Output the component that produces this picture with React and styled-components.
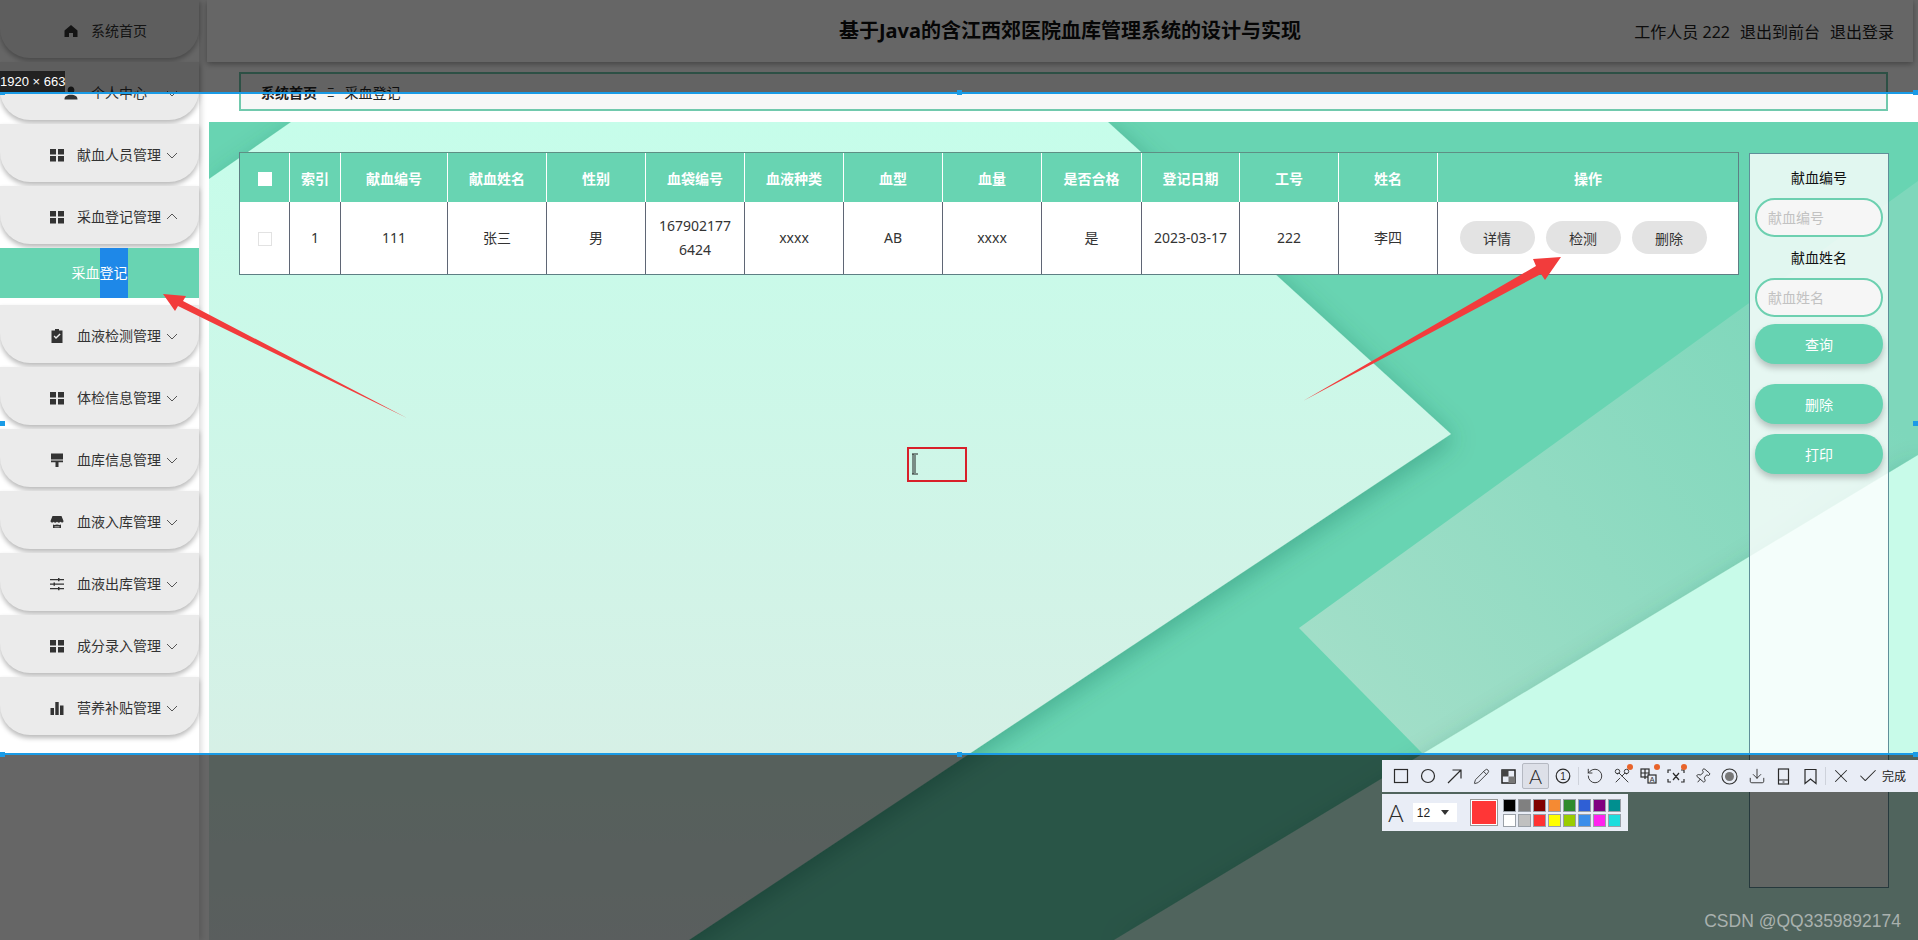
import React from "react";
import styled, { createGlobalStyle } from "styled-components";
import { RotateCcw, Pencil, Scissors, Pin, Download, X, Check } from "lucide-react";

const FONT = `"Noto Sans", "Noto Sans CJK SC", "Liberation Sans", sans-serif`;
const GREEN = "#68d4b2";

const Global = createGlobalStyle`
  html, body {
    margin: 0;
    height: 940px;
    overflow: hidden;
    background: #fff;
    font-family: ${FONT};
  }
  * { box-sizing: border-box; }
`;

const Page = styled.div`
  position: relative;
  display: flex;
  width: 1918px;
  height: 940px;
  overflow: hidden;
`;

/* 侧边栏 */
const Sidebar = styled.aside`
  flex: none;
  width: 199px;
  margin-right: 10px;
  background: #fff;
  box-shadow: 3px 0 5px rgba(0, 0, 0, 0.12);
`;

const MenuItem = styled.div`
  display: grid;
  grid-template-columns: 77px 84px 1fr;
  align-items: center;
  height: 58px;
  margin-bottom: 4px;
  padding: 3px 22px 0 0;
  background: #ebebeb;
  border-radius: 0 0 30px 30px;
  box-shadow: 0 3px 5px rgba(0, 0, 0, 0.28);
  color: #333;
  font-size: 14px;
  line-height: 20px;
  text-align: center;
`;

const MenuIcon = styled.svg`
  justify-self: end;
  width: 14px;
  height: 14px;
  margin-right: ${(p) => (p.$short ? "-1px" : "13px")};
  fill: #333;
`;

const Chevron = styled.svg`
  justify-self: end;
  width: 10px;
  height: 10px;
  fill: none;
  stroke: #555;
  stroke-width: 1;
`;

const SubItem = styled.div`
  height: 50px;
  margin-bottom: 7px;
  background: ${GREEN};
  color: #fff;
  font-size: 14px;
  line-height: 50px;
  text-align: center;
`;

const Selected = styled.span`
  display: inline-block;
  background: #1e88e8;
`;

const icons = {
  home: <path d="M7 1 13.5 6.6V13H9V9H5v4H.5V6.6z" />,
  user: <path d="M7 .5c2 0 3.4 1.5 3.4 3.6S9 7.8 7 7.8 3.6 6.2 3.6 4.1 5 .5 7 .5zM.5 13.5c0-3.2 2.6-4.7 6.5-4.7s6.500 1.500 6.500 4.700z" />,
  grid: <path d="M0 1h6v5.500H0zM8 1h6v5.500H8zM0 8h6v5.500H0zM8 8h6v5.500H8z" />,
  claim: <path fillRule="evenodd" d="M5 0h4v1.500h3.500V14h-11V1.500H5zM3.600 7.500 6 10l4.600-4.600-1-1L6 8 4.600 6.500z" />,
  brush: <path d="M1 .5h12v6H1zM1 7.500h12v1.800H8.500V14h-3V9.300H1z" />,
  shop: <path d="M2.500 1h9L13.500 6c0 2-2.200 2-3.200.8-1 1.200-1.700 1.200-3.300 0-1.600 1.200-2.300 1.200-3.300 0C3.700 8 .5 8 .5 6zM3 9.500c1 .6 2.300.4 4 0 1.700.4 3 .6 4 0V13H3zM4.500 11.500v.7h5v-.7z" />,
  sliders: <path d="M0 2h8V1h1.500v1H14v1.200H9.500v1H8v-1H0zM0 6.500h3.500v-1H5v1h9v1.200H5v1H3.500v-1H0zM0 11h8v-1h1.500v1H14v1.200H9.500v1H8v-1H0z" />,
  bars: <path d="M.5 7H4v7H.5zM5.300 1h3.400v13H5.300zM10 4.500h3.500V14H10z" />
};

const menu = [
  { icon: "home", label: "系统首页", plain: true },
  { icon: "user", label: "个人中心" },
  { icon: "grid", label: "献血人员管理" },
  { icon: "grid", label: "采血登记管理", open: true },
  { icon: "claim", label: "血液检测管理" },
  { icon: "grid", label: "体检信息管理" },
  { icon: "brush", label: "血库信息管理" },
  { icon: "shop", label: "血液入库管理" },
  { icon: "sliders", label: "血液出库管理" },
  { icon: "grid", label: "成分录入管理" },
  { icon: "bars", label: "营养补贴管理" }
];

/* 右侧 */
const Main = styled.main`
  flex: 1;
  display: flex;
  flex-direction: column;
  min-width: 0;
`;

const Header = styled.header`
  flex: none;
  display: grid;
  grid-template-columns: 1fr auto 1fr;
  align-items: center;
  height: 62px;
  margin: 0 5px 10px -2px;
  padding: 0 19px 0 39px;
  background: #fff;
  box-shadow: 0 2px 6px rgba(0, 0, 0, 0.35);
`;

const Title = styled.h1`
  grid-column: 2;
  margin: 0;
  color: #111;
  font-size: 20px;
  font-weight: 700;
  line-height: 28px;
  white-space: nowrap;
`;

const HeaderLinks = styled.div`
  display: flex;
  justify-self: end;
  gap: 10px;
  color: #222;
  font-size: 16px;
  white-space: nowrap;
`;

const Breadcrumb = styled.nav`
  flex: none;
  display: flex;
  align-items: center;
  gap: 10px;
  height: 39px;
  margin: 0 30px 11px;
  padding: 1px 20px 0;
  border: 2px solid #71c9ad;
  background: #f7f7f7;
  color: #222;
  font-size: 14px;
`;

const Crumb = styled.span`
  font-weight: ${(p) => (p.$strong ? 700 : 400)};
`;

const Sep = styled.span`
  font-size: 12px;
  color: #333;
`;

const Content = styled.section`
  position: relative;
  flex: 1;
  display: flex;
  align-items: flex-start;
  gap: 10px;
  padding: 30px 29px 0 30px;
  overflow: hidden;
`;

const Backdrop = styled.svg`
  position: absolute;
  inset: 0;
  width: 100%;
  height: 100%;
`;

const TableWrap = styled.div`
  position: relative;
  flex: none;
  width: 1500px;
  border: 1px solid #5e7f84;
  border-top-color: #5e8f84;
`;

const Table = styled.table`
  width: 100%;
  table-layout: fixed;
  border-collapse: separate;
  border-spacing: 0;
  font-size: 14px;
  text-align: center;
`;

const Th = styled.th`
  height: 49px;
  padding: 0;
  background: ${GREEN};
  border-left: ${(p) => (p.$first ? "0" : "1px solid #fff")};
  color: #fff;
  font-size: 14px;
  font-weight: 700;
`;

const Td = styled.td`
  height: 72px;
  padding: 0 10px;
  background: #fff;
  border-left: ${(p) => (p.$first ? "0" : "1px solid #5f6675")};
  color: #333;
  line-height: 24px;
  word-break: break-all;
`;

const ActionsCell = styled.div`
  display: flex;
  justify-content: center;
  gap: 11px;
  margin: -1px 10px 0 0;
`;

const Box = styled.span`
  display: inline-block;
  width: 14px;
  height: 14px;
  vertical-align: middle;
  background: ${(p) => (p.$filled ? "#fff" : "transparent")};
  border: 1px solid ${(p) => (p.$filled ? "#fff" : "#e2e2e2")};
`;

const ActionBtn = styled.button`
  width: 75px;
  height: 33px;
  padding: 0;
  border: 0;
  border-radius: 17px;
  background: #e3e3e3;
  color: #333;
  font-family: inherit;
  font-size: 14px;
`;

const Panel = styled.aside`
  position: relative;
  flex: none;
  display: flex;
  flex-direction: column;
  align-items: center;
  width: 140px;
  height: 735px;
  margin-top: 1px;
  padding: 12px 5px 0;
  background: rgba(255, 255, 255, 0.8);
  border: 1px solid #5f8f99;
`;

const PanelLabel = styled.label`
  height: 24px;
  margin: 0 0 8px;
  color: #111;
  font-size: 14px;
  line-height: 24px;
`;

const PanelInput = styled.input`
  width: 128px;
  height: 39px;
  margin-bottom: ${(p) => (p.$last ? "7px" : "9px")};
  padding: 0 11px;
  border: 2px solid #6dd0b0;
  border-radius: 20px;
  background: #f6f6f6;
  font-family: inherit;
  font-size: 14px;
  outline: none;
  &::placeholder { color: #c2c2c2; }
`;

const PanelBtn = styled.button`
  flex: none;
  width: 128px;
  height: 40px;
  margin-bottom: ${(p) => p.$gap}px;
  border: 0;
  border-radius: 20px;
  background: #66d3b2;
  box-shadow: 0 4px 6px rgba(0, 0, 0, 0.22);
  color: #fff;
  font-family: inherit;
  font-size: 14px;
`;

/* 截图工具遮罩 */
const Dim = styled.div`
  position: absolute;
  left: 0;
  width: 100%;
  top: ${(p) => p.$top}px;
  height: ${(p) => p.$height}px;
  background: rgba(0, 0, 0, 0.6);
`;

const SelectLine = styled.div`
  position: absolute;
  left: 0;
  top: 92px;
  width: 1918px;
  height: 663px;
  border: solid #1a9be6;
  border-width: 2px 0;
`;

const Handle = styled.i`
  position: absolute;
  width: 5px;
  height: 5px;
  background: #1a9be6;
  left: ${(p) => p.$x}px;
  top: ${(p) => p.$y}px;
`;

const SizeTag = styled.div`
  position: absolute;
  left: 0;
  top: 71px;
  width: 65px;
  height: 21px;
  background: #222;
  color: #fff;
  font-family: "Liberation Sans", sans-serif;
  font-size: 13px;
  line-height: 21px;
  white-space: nowrap;
`;

const Annotations = styled.svg`
  position: absolute;
  left: 0;
  top: 0;
  width: 1918px;
  height: 940px;
  pointer-events: none;
`;

const ToolBar = styled.div`
  position: absolute;
  left: 1382px;
  top: 760px;
  display: flex;
  align-items: center;
  width: 536px;
  height: 32px;
  padding-left: 5px;
  background: #e9edf6;
  color: #2b2b2b;
`;

const Tool = styled.span`
  position: relative;
  flex: none;
  display: flex;
  align-items: center;
  justify-content: center;
  width: 27px;
  height: 26px;
  border: 1px solid ${(p) => (p.$active ? "#b5b9c2" : "transparent")};
  background: ${(p) => (p.$active ? "#dde0e8" : "transparent")};
  border-radius: 2px;
`;

const Dot = styled.i`
  position: absolute;
  right: 1px;
  top: 0;
  width: 6px;
  height: 6px;
  border-radius: 50%;
  background: #e8632a;
`;

const ToolSep = styled.span`
  flex: none;
  width: 1px;
  height: 18px;
  margin: 0 ${(p) => p.$m}px;
  background: #ced2db;
`;

const BigA = styled.span`
  font-family: Lato, "Liberation Sans", sans-serif;
  font-weight: 300;
  font-size: ${(p) => p.$size}px;
  line-height: 1;
  color: #2b2b2b;
`;

const DoneText = styled.span`
  margin-left: 1px;
  color: #222;
  font-size: 12px;
  white-space: nowrap;
`;

const OptionBar = styled.div`
  position: absolute;
  left: 1382px;
  top: 794px;
  display: flex;
  align-items: center;
  width: 246px;
  height: 37px;
  padding-left: 6px;
  background: #e9edf6;
`;

const SizeSelect = styled.div`
  display: flex;
  align-items: center;
  justify-content: space-between;
  width: 44px;
  height: 19px;
  margin: 0 13px 0 9px;
  padding: 0 8px 0 4px;
  background: #fff;
  color: #222;
  font-family: "Liberation Sans", sans-serif;
  font-size: 12px;
  &::after {
    content: "";
    border: 4px solid transparent;
    border-top: 5px solid #333;
    border-bottom: 0;
  }
`;

const CurrentColor = styled.span`
  flex: none;
  width: 28px;
  height: 27px;
  margin-right: 5px;
  background: #ff3636;
  border: 1px solid #999;
  outline: 1px solid #fff;
  outline-offset: -2px;
`;

const Swatches = styled.div`
  display: grid;
  grid-template-columns: repeat(8, 13px);
  gap: 2px;
`;

const Swatch = styled.span`
  height: 13px;
  background: ${(p) => p.$c};
  border: 1px solid #9aa0a8;
`;

const Watermark = styled.div`
  position: absolute;
  right: 17px;
  top: 911px;
  color: #a9b1ae;
  font-family: "Liberation Sans", sans-serif;
  font-size: 17.5px;
  white-space: nowrap;
`;

const columns = [49, 51, 107, 99, 99, 99, 99, 99, 99, 100, 98, 99, 99];
const heads = ["索引", "献血编号", "献血姓名", "性别", "血袋编号", "血液种类", "血型", "血量", "是否合格", "登记日期", "工号", "姓名", "操作"];
const row = ["1", "111", "张三", "男", "1679021776424", "xxxx", "AB", "xxxx", "是", "2023-03-17", "222", "李四"];
const colors = ["#000", "#808080", "#800000", "#f58a33", "#2e8b2e", "#2f5fd5", "#800080", "#008f8f", "#fff", "#c0c0c0", "#ff3333", "#ffff00", "#99cc00", "#3b8eea", "#ff22ee", "#1ddddd"];

const stroke = { fill: "none", stroke: "currentColor", strokeWidth: 1.2 };

function Background() {
  return (
    <Backdrop viewBox="209 122 1709 818" preserveAspectRatio="none">
      <defs>
        <linearGradient id="light" x1="0" y1="122" x2="0" y2="940" gradientUnits="userSpaceOnUse">
          <stop offset="0" stopColor="#c6fdea" />
          <stop offset="0.77" stopColor="#d6f0e6" />
          <stop offset="1" stopColor="#e0ecea" />
        </linearGradient>
        <linearGradient id="glass" x1="1300" y1="700" x2="1800" y2="300" gradientUnits="userSpaceOnUse">
          <stop offset="0" stopColor="#a4dfc9" />
          <stop offset="1" stopColor="#7ed7bb" />
        </linearGradient>
        <filter id="soft" x="-10%" y="-10%" width="120%" height="120%">
          <feDropShadow dx="4" dy="6" stdDeviation="12" floodColor="#0f5a44" floodOpacity="0.3" />
        </filter>
      </defs>
      <rect x="209" y="122" width="1709" height="818" fill={GREEN} />
      <polygon points="1299,628 1918,181 1918,455 1424,755" fill="url(#glass)" />
      <polygon points="1114,940 1918,455 1918,940" fill="#c8fbe9" filter="url(#soft)" />
      <polygon points="291,122 1108,122 1451,434 689,940 209,940 209,179" fill="url(#light)" filter="url(#soft)" />
    </Backdrop>
  );
}

function Tools() {
  return (
    <ToolBar>
      <Tool><svg width="16" height="16" {...stroke}><rect x="1.5" y="1.5" width="13" height="13" /></svg></Tool>
      <Tool><svg width="16" height="16" {...stroke}><circle cx="8" cy="8" r="6.5" /></svg></Tool>
      <Tool><svg width="17" height="17" {...stroke}><path d="M2 15 15 2M6.5 2H15v8.500" /></svg></Tool>
      <Tool><Pencil size={17} strokeWidth={1.2} /></Tool>
      <Tool>
        <svg width="15" height="15">
          <rect x="1" y="1" width="13" height="13" fill="none" stroke="#222" strokeWidth="1.5" />
          <rect x="1" y="1" width="6.5" height="6.5" fill="#444" />
          <rect x="7.5" y="7.5" width="6.5" height="6.5" fill="#777" />
        </svg>
      </Tool>
      <Tool $active><BigA $size={20}>A</BigA></Tool>
      <Tool>
        <svg width="16" height="16" {...stroke}>
          <circle cx="8" cy="8" r="6.8" />
          <text x="8" y="11.5" textAnchor="middle" fontSize="10" fill="currentColor" stroke="none" fontFamily="Liberation Sans">1</text>
        </svg>
      </Tool>
      <ToolSep $m={2} />
      <Tool><RotateCcw size={18} strokeWidth={1.2} /></Tool>
      <Tool><Scissors size={18} strokeWidth={1.2} style={{ transform: "rotate(90deg)" }} /><Dot /></Tool>
      <Tool>
        <svg width="18" height="16" {...stroke}>
          <rect x="1" y="1" width="8" height="8" />
          <path d="M1 5h8M5 1v10" />
          <rect x="8" y="7" width="8" height="8" fill="#e9edf6" />
          <text x="12" y="14" textAnchor="middle" fontSize="7" fill="currentColor" stroke="none" fontFamily="Liberation Sans">A</text>
        </svg>
        <Dot />
      </Tool>
      <Tool>
        <svg width="18" height="16" {...stroke}>
          <path d="M1 5V2h3M14 2h3v3M1 11v3h3M14 14h3v-3M6 5l6 7M12 5l-6 7" />
        </svg>
        <Dot />
      </Tool>
      <Tool><Pin size={17} strokeWidth={1.2} style={{ transform: "rotate(40deg)" }} /></Tool>
      <Tool>
        <svg width="17" height="17">
          <circle cx="8.5" cy="8.5" r="7.5" fill="none" stroke="#333" strokeWidth="1.1" />
          <circle cx="8.5" cy="8.5" r="4.5" fill="#777" />
        </svg>
      </Tool>
      <Tool><Download size={18} strokeWidth={1.2} /></Tool>
      <Tool>
        <svg width="14" height="17" {...stroke}><rect x="1.5" y="1" width="10" height="15" /><path d="M1.5 12h10M5.500 14h2" /></svg>
      </Tool>
      <Tool><svg width="15" height="17" {...stroke}><path d="M2 1.500h11V15.500L7.500 11 2 15.500z" /></svg></Tool>
      <ToolSep $m={1} />
      <Tool><X size={22} strokeWidth={1.1} /></Tool>
      <Tool><Check size={22} strokeWidth={1.1} /></Tool>
      <DoneText>完成</DoneText>
    </ToolBar>
  );
}

export default function App() {
  return (
    <Page>
      <Global />
      <Sidebar>
        {menu.map((m) => (
          <React.Fragment key={m.label}>
            <MenuItem>
              <MenuIcon viewBox="0 0 14 14" $short={m.label.length === 4}>{icons[m.icon]}</MenuIcon>
              <span>{m.label}</span>
              {!m.plain && (
                <Chevron viewBox="0 0 10 10">
                  <polyline points={m.open ? "0,7 5,2 10,7" : "0,3 5,8 10,3"} />
                </Chevron>
              )}
            </MenuItem>
            {m.open && <SubItem>采血<Selected>登记</Selected></SubItem>}
          </React.Fragment>
        ))}
      </Sidebar>

      <Main>
        <Header>
          <Title>基于Java的含江西郊医院血库管理系统的设计与实现</Title>
          <HeaderLinks>
            <span>工作人员&nbsp;222</span>
            <span>退出到前台</span>
            <span>退出登录</span>
          </HeaderLinks>
        </Header>
        <Breadcrumb>
          <Crumb $strong>系统首页</Crumb>
          <Sep>Ξ</Sep>
          <Crumb>采血登记</Crumb>
        </Breadcrumb>
        <Content>
          <Background />
          <TableWrap>
            <Table>
              <colgroup>
                {columns.map((w, i) => <col key={i} style={{ width: w }} />)}
                <col />
              </colgroup>
              <thead>
                <tr>
                  <Th $first><Box $filled /></Th>
                  {heads.map((h) => <Th key={h}>{h}</Th>)}
                </tr>
              </thead>
              <tbody>
                <tr>
                  <Td $first><Box /></Td>
                  {row.map((c, i) => <Td key={i}>{c}</Td>)}
                  <Td>
                    <ActionsCell>
                      <ActionBtn>详情</ActionBtn>
                      <ActionBtn>检测</ActionBtn>
                      <ActionBtn>删除</ActionBtn>
                    </ActionsCell>
                  </Td>
                </tr>
              </tbody>
            </Table>
          </TableWrap>
          <Panel>
            <PanelLabel>献血编号</PanelLabel>
            <PanelInput placeholder="献血编号" />
            <PanelLabel>献血姓名</PanelLabel>
            <PanelInput $last placeholder="献血姓名" />
            <PanelBtn $gap={20}>查询</PanelBtn>
            <PanelBtn $gap={10}>删除</PanelBtn>
            <PanelBtn $gap={0}>打印</PanelBtn>
          </Panel>
        </Content>
      </Main>

      <Annotations viewBox="0 0 1918 940">
        <polygon points="163,294 186,296 183,301 407,418 178,306 175,311" fill="#f23c3c" />
        <polygon points="1561,257 1545,280 1541,274 1303,401 1536,266 1533,259" fill="#f23c3c" />
        <rect x="908" y="448" width="58" height="33" fill="none" stroke="#d8202a" strokeWidth="2" />
        <path d="M913 454v20M915 455v18M912 454h6M912 474h6" fill="none" stroke="#222" strokeWidth="1" />
      </Annotations>

      <Dim $top={0} $height={93} />
      <Dim $top={755} $height={185} />
      <SelectLine />
      <Handle $x={0} $y={90} />
      <Handle $x={957} $y={90} />
      <Handle $x={1913} $y={90} />
      <Handle $x={0} $y={421} />
      <Handle $x={1913} $y={421} />
      <Handle $x={0} $y={752} />
      <Handle $x={957} $y={752} />
      <Handle $x={1913} $y={752} />
      <SizeTag>1920 × 663</SizeTag>

      <Tools />
      <OptionBar>
        <BigA $size={24}>A</BigA>
        <SizeSelect>12</SizeSelect>
        <CurrentColor />
        <Swatches>
          {colors.map((c) => <Swatch key={c} $c={c} />)}
        </Swatches>
      </OptionBar>
      <Watermark>CSDN @QQ3359892174</Watermark>
    </Page>
  );
}
